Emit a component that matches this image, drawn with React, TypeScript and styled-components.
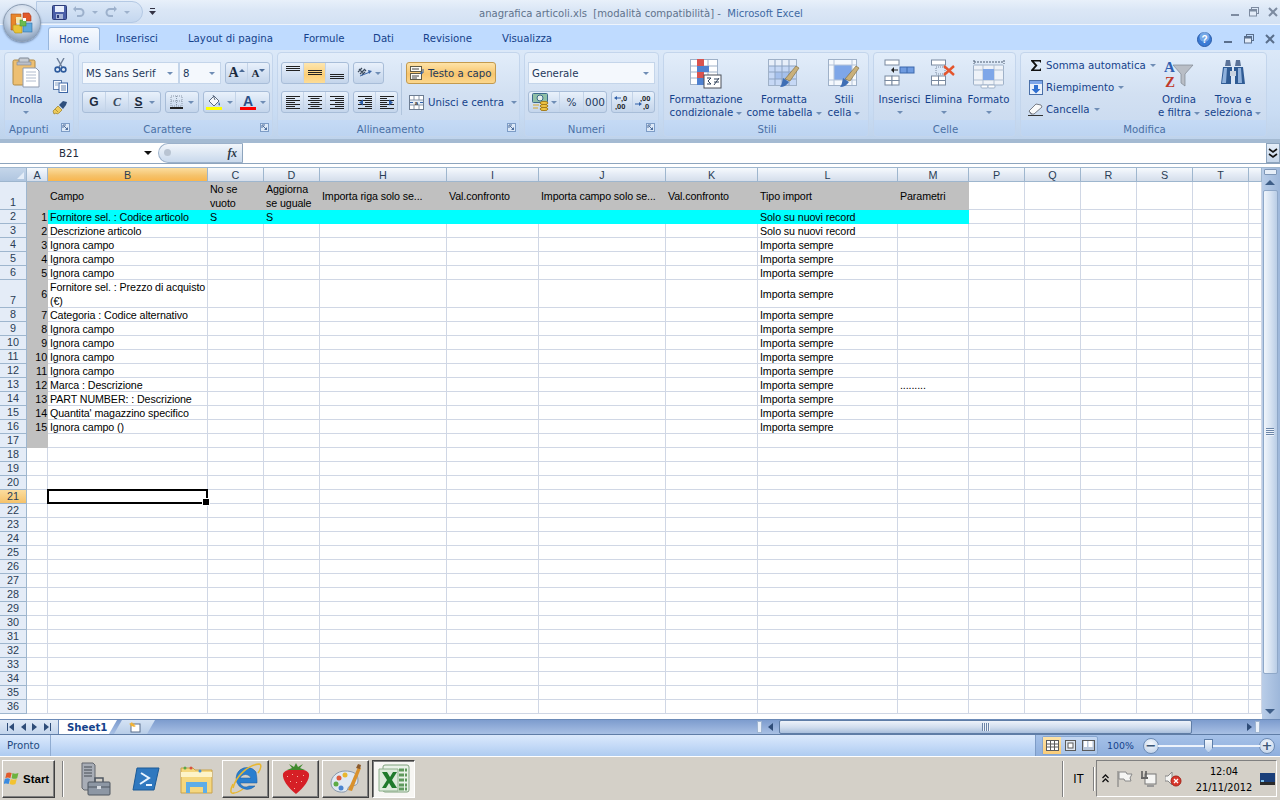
import React from 'react';
import styled, { createGlobalStyle } from 'styled-components';

const Global = createGlobalStyle`
  html, body { margin: 0; padding: 0; width: 1280px; height: 800px; overflow: hidden; background: #d4d0c8; }
  * { box-sizing: border-box; }
`;

const UI = `"DejaVu Sans", "Liberation Sans", sans-serif`;
const CELL = `"Liberation Sans", Arial, sans-serif`;

const Page = styled.div`
  position: relative; width: 1280px; height: 800px; display: flex; flex-direction: column;
  overflow: hidden; font-family: ${UI}; font-size: 10.2px; color: #15428b;
`;

/* ---------- title ---------- */
const TitleBar = styled.div`
  height: 25px; flex: none; display: flex; align-items: center; position: relative;
  background: linear-gradient(#e8f0fa 0, #dbe7f6 40%, #d3e1f3 100%);
  border-bottom: 1px solid #eef4fc;
`;
const Qat = styled.div`
  margin-left: 36px; width: 107px; height: 22px; border-radius: 0 11px 11px 0; display: flex; align-items: center;
  padding-left: 15px; gap: 0; background: linear-gradient(#dce8f7, #c4d7ef); border: 1px solid #b4c9e4;
`;
const QatItem = styled.div<{ $w: number }>`
  width: ${p => p.$w}px; display: flex; align-items: center; justify-content: center;
`;
const QatMore = styled.div`
  margin-left: 6px; display: flex;
`;
const TitleText = styled.div`
  position: absolute; left: 479px; top: 8px; font-size: 10.05px; color: #60738c; white-space: pre;
`;
const TitleApp = styled.span`color: #3f6aa3;`;
const WinControls = styled.div`
  margin-left: auto; display: flex; align-items: center; gap: 9px; padding-right: 2px;
`;

/* ---------- orb ---------- */
const Orb = styled.div`
  position: absolute; left: 3px; top: 4px; width: 38px; height: 38px; border-radius: 50%;
  display: flex; align-items: center; justify-content: center;
  background: radial-gradient(circle at 50% 30%, #f4f7fb 0, #c6d4e6 50%, #7f97b5 85%, #5f7690 100%);
  border: 1px solid #8b9cb2; box-shadow: 0 1px 2px rgba(60, 80, 110, .6);
`;

/* ---------- tabs ---------- */
const TabBar = styled.div`
  height: 25px; flex: none; display: flex; align-items: flex-end; background: #bfdbff; padding-left: 48px;
`;
const Tab = styled.div<{ $w: number; $on?: boolean }>`
  width: ${p => p.$w}px; height: 23px; display: flex; align-items: center; justify-content: center; font-size: 10.2px;
  color: #15428b; border-radius: 3px 3px 0 0;
  ${p => p.$on ? `background: linear-gradient(#f6f9fe, #dfeafa); border: 1px solid #98b6dc; border-bottom: none;` : ''}
`;
const HelpBox = styled.div`
  margin-left: auto; height: 22px; display: flex; align-items: center; gap: 11px; padding-right: 5px;
`;

/* ---------- ribbon ---------- */
const Ribbon = styled.div`
  height: 93px; flex: none; display: flex; gap: 4px; padding: 2px 0 0 4px;
  background: linear-gradient(#dbe8f8, #c9dcf3 70%, #bed3ec);
  border-bottom: 4px solid #a4bad2;
`;
const Group = styled.div<{ $w: number }>`
  width: ${p => p.$w}px; height: 85px; display: flex; flex-direction: column; border-radius: 4px;
  border: 1px solid #c3d5ec; background: linear-gradient(#e2edfa, #d2e0f2 50%, #c8d9ef); overflow: hidden;
`;
const GroupBody = styled.div<{ $pt?: number; $pl?: number }>`
  flex: 1; display: flex; min-height: 0; padding: ${p => p.$pt ?? 0}px 0 0 ${p => p.$pl ?? 0}px;
`;
const GroupLabel = styled.div<{ $pr?: number; $start?: boolean }>`
  position: relative; height: 16px; flex: none; display: flex; align-items: center;
  justify-content: ${p => (p.$start ? 'flex-start' : 'center')};
  padding: 2px ${p => p.$pr ?? 0}px 0 ${p => (p.$start ? 4 : 2)}px;
  background: linear-gradient(#c5daf5, #bdd4f1); color: #4a70a5; font-size: 10.2px;
`;
const Launcher = styled.span`
  position: absolute; right: 3px; top: 3px; width: 9px; height: 9px; display: flex;
`;
const Stack = styled.div<{ $gap?: number; $w?: number; $pt?: number }>`
  display: flex; flex-direction: column; gap: ${p => p.$gap ?? 0}px; padding-top: ${p => p.$pt ?? 0}px; ${p => (p.$w ? `width: ${p.$w}px;` : '')}
`;
const Row = styled.div<{ $gap?: number }>`
  display: flex; align-items: center; gap: ${p => p.$gap ?? 0}px;
`;
const Large = styled.div<{ $w: number }>`
  width: ${p => p.$w}px; flex: none; display: flex; flex-direction: column; align-items: center; padding-top: 4px;
  color: #15428b; font-size: 10.2px; line-height: 13px; text-align: center; white-space: nowrap;
`;
const LargeIcon = styled.div`
  height: 36px; padding-top: 2px; display: flex; align-items: flex-start; justify-content: center;
`;
const PasteBox = styled.div`margin-top: -2px;`;
const CaretBox = styled.div`
  height: 13px; display: flex; align-items: center; justify-content: center;
`;
const Caret = styled.span<{ $c?: string; $ml?: number }>`
  display: inline-block; width: 0; height: 0; margin-left: ${p => p.$ml ?? 0}px; vertical-align: middle;
  border-left: 3px solid transparent; border-right: 3px solid transparent; border-top: 3px solid ${p => p.$c ?? '#6f8db5'};
`;
const SmallIcons = styled.div`
  display: flex; flex-direction: column; align-items: center; width: 26px; gap: 7px; padding-top: 5px;
`;
const Combo = styled.div<{ $w: number }>`
  width: ${p => p.$w}px; height: 22px; display: flex; align-items: center; justify-content: space-between;
  padding: 0 5px 0 3px; background: #f4f8fd; border: 1px solid #c4d5ea; color: #1e395b; font-size: 10.2px; white-space: nowrap;
`;
const Combos = styled.div`
  display: flex;
`;
const BtnGroup = styled.div`
  height: 22px; display: inline-flex; border: 1px solid #a8bdd8; border-radius: 3px; overflow: hidden;
  background: linear-gradient(#e9f1fb, #d5e2f3 50%, #c4d5eb);
`;
const Seg = styled.div<{ $w: number; $on?: boolean; $gap?: number }>`
  width: ${p => p.$w}px; display: flex; align-items: center; justify-content: center; gap: ${p => p.$gap ?? 2}px; color: #1e395b;
  border-right: 1px solid #c4d4e8;
  &:last-child { border-right: none; }
  ${p => p.$on ? 'background: linear-gradient(#fde6b0, #fbcf78 60%, #fcdc97);' : ''}
`;
const Divider = styled.div`
  width: 1px; height: 52px; background: #b1c5dd; margin: 1px 4px 0 3px; flex: none;
`;
const Wrap = styled.div`
  width: 90px; height: 22px; display: flex; align-items: center; gap: 2px; padding-left: 3px; border: 1px solid #c39a4e; border-radius: 3px;
  background: linear-gradient(#fde3a8, #f8c56d 55%, #fbd78e); color: #1e395b; font-size: 10.2px; white-space: nowrap;
`;
const Merge = styled.div`
  height: 22px; display: flex; align-items: center; gap: 4px; padding-left: 3px; color: #15428b; font-size: 10.2px; white-space: nowrap;
`;
const SmallAction = styled.div`
  height: 22px; display: flex; align-items: center; gap: 3px; padding-left: 3px; color: #15428b; white-space: nowrap;
`;
const ActionIcon = styled.span`
  width: 15px; height: 15px; display: flex; align-items: center; justify-content: center; flex: none;
`;
const Num = styled.span`
  font-size: 10.5px; color: #1e395b; font-family: ${UI};
`;

/* ---------- formula ---------- */
const FormulaBar = styled.div`
  height: 21px; flex: none; display: flex; align-items: stretch; background: #fff; border-bottom: 1px solid #8da4bd;
`;
const NameBox = styled.div`
  width: 154px; display: flex; align-items: center; padding: 0 0 0 59px; font-size: 10.2px; color: #1e2b3c;
`;
const NameText = styled.span`flex: 1;`;
const NameArrow = styled.span`
  width: 0; height: 0; margin-right: 2px; border-left: 4px solid transparent; border-right: 4px solid transparent; border-top: 4px solid #111;
`;
const FxPill = styled.div`
  position: relative; margin-left: 4px; width: 85px; display: flex; align-items: center; justify-content: flex-end; padding-right: 5px;
  background: linear-gradient(#f2f6fb, #c9d9ec); border: 1px solid #9cb1ca; border-right: 1px solid #8da4bd; border-radius: 11px 0 0 11px;
  font-family: "Liberation Serif", serif; font-style: italic; font-weight: bold; font-size: 11.5px; color: #2b3848;
  &::before { content: ''; position: absolute; left: 5px; top: 5px; width: 7px; height: 7px; border-radius: 50%; background: #b9c4d2; }
`;
const FormulaInput = styled.div`flex: 1; background: #fff;`;
const Expand = styled.div`
  width: 14px; background: linear-gradient(#e6eef8, #c5d6ea); border: 1px solid #8da4bd; display: flex; align-items: center; justify-content: center;
`;
const Gap = styled.div`height: 4px; flex: none; background: #fff; border-bottom: 1px solid #9eb6ce;`;

/* ---------- sheet ---------- */
const Sheet = styled.div`
  height: 551px; flex: none; display: flex; background: #fff;
`;
const COLS = [27, 21, 160, 56, 56, 127, 92, 127, 92, 140, 71, 56, 56, 56, 56, 56, 13];
const ROWS = [14, 28, 14, 14, 14, 14, 14, 28, ...Array(29).fill(14)];
const Grid = styled.div`
  width: 1262px; height: 551px; overflow: hidden; display: grid;
  grid-template-columns: ${COLS.map(c => c + 'px').join(' ')};
  grid-template-rows: ${ROWS.map(c => c + 'px').join(' ')};
  font-family: ${CELL}; font-size: 10.7px; color: #000;
`;
const Corner = styled.div`
  background: linear-gradient(#c5d6ea, #b0c6e0); border-right: 1px solid #9eb6ce; border-bottom: 1px solid #9eb6ce; position: relative;
  &::after { content: ''; position: absolute; right: 2px; bottom: 2px; width: 0; height: 0; border-left: 7px solid transparent; border-bottom: 7px solid #e4edf8; }
`;
const ColHead = styled.div<{ $on?: boolean }>`
  display: flex; align-items: center; justify-content: center; font-size: 10.8px; color: #2a3d55;
  border-right: 1px solid #9eb6ce; border-bottom: 1px solid #9eb6ce;
  background: ${p => p.$on ? 'linear-gradient(#fbdd9f, #f5c26a 60%, #f9b64e)' : 'linear-gradient(#f7fafd, #e4ebf5 50%, #d5deeb)'};
`;
const RowHead = styled.div<{ $on?: boolean; $low?: boolean }>`
  display: flex; align-items: ${p => (p.$low ? 'flex-end' : 'center')}; justify-content: center; font-size: 10.8px; color: #2a3d55;
  border-right: 1px solid #9eb6ce; border-bottom: 1px solid #9eb6ce; line-height: 13px;
  background: ${p => p.$on ? 'linear-gradient(#fbdd9f, #f5c26a)' : '#e4ecf7'};
`;
const Cell = styled.div<{ $fill?: string; $right?: boolean; $wrap?: boolean }>`
  position: relative; min-width: 0; display: flex; align-items: center; padding: 0 ${p => (p.$right ? 1 : 0)}px 0 ${p => (p.$right ? 0 : 2)}px;
  justify-content: ${p => (p.$right ? 'flex-end' : 'flex-start')};
  white-space: ${p => (p.$wrap ? 'normal' : 'nowrap')}; line-height: 14px; letter-spacing: -0.1px;
  ${p => p.$fill ? `background: ${p.$fill};` : `border-right: 1px solid #d0d7e5; border-bottom: 1px solid #d0d7e5;`}
`;
const Selected = styled.div`
  position: absolute; left: -1px; top: -1px; width: 161px; height: 15px; border: 2px solid #000; z-index: 2;
  &::after { content: ''; position: absolute; right: -4px; bottom: -4px; width: 6px; height: 6px; background: #000; border: 1px solid #fff; }
`;
const VScroll = styled.div`
  width: 18px; flex: none; display: flex; flex-direction: column; align-items: center; padding-right: 2px;
  background: linear-gradient(90deg, #b9cde8, #9db7da);
`;
const Split = styled.div`
  height: 6px; width: 13px; flex: none; background: #e6eef8; border: 1px solid #7e97b7; border-radius: 1px; margin-top: 1px;
`;
const VArrow = styled.div<{ $down?: boolean }>`
  height: 15px; width: 15px; flex: none; display: flex; align-items: center; justify-content: center;
  &::after { content: ''; width: 0; height: 0; border-left: 5px solid transparent; border-right: 5px solid transparent;
    ${p => (p.$down ? 'border-top: 5px solid #3e5e88;' : 'border-bottom: 5px solid #3e5e88;')} }
`;
const VThumb = styled.div`
  flex: none; width: 15px; height: 484px; margin-top: 0; border: 1px solid #8fa8c8; border-radius: 2px;
  background: linear-gradient(90deg, #f0f5fb, #d7e3f2 50%, #b9cde6); display: flex; align-items: center; justify-content: center;
`;
const Grip = styled.span<{ $h?: boolean }>`
  display: block; ${p => (p.$h
    ? 'width: 8px; height: 8px; background: repeating-linear-gradient(90deg, #6b85a8 0 1px, #eef3fa 1px 2px);'
    : 'width: 8px; height: 8px; background: repeating-linear-gradient(#6b85a8 0 1px, #eef3fa 1px 2px);')}
`;
const VSpacer = styled.div`flex: 1;`;

/* ---------- sheet tabs ---------- */
const TabsBar = styled.div`
  height: 16px; flex: none; display: flex; align-items: stretch; background: linear-gradient(#7d9cce, #a8c0e4);
  border-top: 1px solid #6c8bb8; border-bottom: 1px solid #5f7da6;
`;
const Nav = styled.div`
  width: 59px; display: flex; align-items: center; justify-content: space-evenly; background: linear-gradient(#dfe9f6, #c3d5ec); border-right: 1px solid #6c8bb8;
`;
const NavItem = styled.span`display: flex; align-items: center; gap: 1px;`;
const NavBar = styled.span`width: 1px; height: 8px; background: #2e4c78;`;
const SheetTab = styled.div`
  width: 58px; background: #fff; color: #15428b; font-weight: bold; font-size: 10.2px; display: flex; align-items: center; padding-left: 8px;
  clip-path: polygon(0 0, 100% 0, calc(100% - 8px) 100%, 0 100%);
`;
const NewTab = styled.div`
  width: 41px; background: linear-gradient(#d4e2f4, #b8cde8); clip-path: polygon(8px 0, 100% 0, calc(100% - 8px) 100%, 0 100%); display: flex; align-items: center; justify-content: center;
  margin-left: -3px;
`;
const HScroll = styled.div`
  margin-left: auto; width: 523px; display: flex; align-items: stretch; padding-right: 20px;
`;
const HBtn = styled.div<{ $w: number }>`
  width: ${p => p.$w}px; flex: none; display: flex; align-items: center; justify-content: center;
`;
const HThumb = styled.div`
  flex: none; width: 413px; background: linear-gradient(#eef3fa, #cfdced 55%, #a9bfdc); border: 1px solid #5f7da6; border-radius: 2px;
  display: flex; align-items: center; justify-content: center;
`;
const HFill = styled.div`flex: 1;`;
const TriR = styled.span<{ $left?: boolean }>`
  width: 0; height: 0; border-top: 4px solid transparent; border-bottom: 4px solid transparent;
  ${p => (p.$left ? 'border-right: 5px solid #2e4c78;' : 'border-left: 5px solid #2e4c78;')}
`;
const HGrip = styled.div`width: 5px; flex: none; margin: 1px 0; background: #eaf1fa; border: 1px solid #9fb5d1;`;

/* ---------- status ---------- */
const Status = styled.div`
  height: 22px; flex: none; display: flex; align-items: stretch; background: linear-gradient(#dbe9fb, #c7dcf8 45%, #aecbf0);
  border-bottom: 1px solid #fff; color: #1e4a80; font-size: 10.2px;
`;
const Pronto = styled.div`
  width: 51px; display: flex; align-items: center; padding-left: 7px; border-right: 1px solid #90acd1; 
`;
const StatusRight = styled.div`
  margin-left: auto; width: 245px; display: flex; align-items: center; padding-left: 6px; color: #15428b;
  background: linear-gradient(#a5c1e8, #8fafdd); border-left: 1px solid #7e9cc6;
`;
const Views = styled.div`
  display: flex; height: 19px; width: 56px; border: 1px solid #87a6d0; border-radius: 2px; background: linear-gradient(#c5d8f2, #a9c4e8);
`;
const ViewBtn = styled.div<{ $on?: boolean }>`
  flex: 1; display: flex; align-items: center; justify-content: center;
  ${p => (p.$on ? 'background: linear-gradient(#fde3a8, #f9cc78);' : '')}
`;
const Zoom = styled.span`margin-left: 9px; width: 36px; font-size: 9.4px;`;
const ZoomTrack = styled.div`
  position: relative; width: 102px; height: 2px; background: #ecf3fc; margin: 0 -1px; 
`;
const ZoomKnob = styled.div`
  position: absolute; left: 46px; top: -6px; width: 9px; height: 14px; background: linear-gradient(#f4f8fd, #b9cee9); border: 1px solid #5d7ea9;
  clip-path: polygon(0 0, 100% 0, 100% 65%, 50% 100%, 0 65%);
`;
const ZoomBtn = styled.div`
  width: 16px; height: 16px; border-radius: 50%; flex: none; border: 1px solid #6d8cb6; background: radial-gradient(circle at 50% 35%, #f6f9fd, #b8cce6);
  display: flex; align-items: center; justify-content: center; color: #3d5878; font-size: 13px; font-weight: bold; line-height: 1;
`;

/* ---------- taskbar ---------- */
const Taskbar = styled.div`
  height: 43px; flex: none; display: flex; align-items: center; background: #d4d0c8; padding: 0 3px 0 2px; font-family: "DejaVu Sans", sans-serif; color: #000;
`;
const StartBtn = styled.div`
  width: 53px; height: 38px; margin-right: 7px; display: flex; align-items: center; gap: 2px; padding-left: 1px; font-family: "Liberation Sans", sans-serif; font-weight: bold; font-size: 11.5px;
  border: 1px solid; border-color: #fff #404040 #404040 #fff; box-shadow: inset -1px -1px 0 #808080;
`;
const Etched = styled.div<{ $h?: number }>`
  width: 2px; height: ${p => p.$h ?? 36}px; flex: none; border-left: 1px solid #808080; border-right: 1px solid #fff;
`;
const Launch = styled.div<{ $w: number; $pl?: number }>`
  width: ${p => p.$w}px; height: 38px; flex: none; display: flex; align-items: center; justify-content: center; padding-left: ${p => p.$pl ?? 0}px;
`;
const TaskBtn = styled.div<{ $down?: boolean; $w: number }>`
  width: ${p => p.$w}px; height: 38px; flex: none; display: flex; align-items: center; justify-content: center; margin-right: 3px;
  border: 1px solid; 
  ${p => p.$down
    ? 'border-color: #404040 #fff #fff #404040; box-shadow: inset 1px 1px 0 #808080; background: #f7f6f3;'
    : 'border-color: #fff #404040 #404040 #fff; box-shadow: inset -1px -1px 0 #808080;'}
`;
const Lang = styled.div`
  width: 29px; text-align: center; font-size: 12px; font-family: "Liberation Sans", sans-serif;
`;
const Tray = styled.div`
  width: 181px; height: 37px; margin-left: 1px; display: flex; align-items: center; border: 1px solid; border-color: #808080 #fff #fff #808080;
`;
const Clock = styled.div`
  margin: 3px 0 0 8px; width: 62px; flex: none; text-align: center; font-size: 9.8px; line-height: 16px; white-space: nowrap; font-family: "DejaVu Sans", sans-serif;
`;
const TrayIcon = styled.div<{ $w?: number }>`
  width: ${p => p.$w ?? 24}px; display: flex; justify-content: center; flex: none;
`;
const Push = styled.div`margin-left: auto;`;

/* ---------- icons ---------- */
const Orblogo = () => (
  <svg width="26" height="26" viewBox="0 0 26 26">
    <path d="M2 4h10v5H7v11H2z" fill="#e8862c" stroke="#a6541b" strokeWidth=".6" />
    <rect x="7" y="7" width="6" height="6" fill="#f4e7a8" />
    <path d="M14 3h6l2 3v5h-8z" fill="#e25a2a" stroke="#a6381b" strokeWidth=".6" />
    <rect x="14" y="13" width="9" height="9" fill="#5fa9dc" stroke="#2f6fa6" strokeWidth=".6" />
    <path d="M4 15h9v8H6l-2-3z" fill="#e9c436" stroke="#a78d1f" strokeWidth=".6" />
    <rect x="11" y="10" width="6" height="6" fill="#6cbb4f" stroke="#3e8c2d" strokeWidth=".5" />
    <rect x="14" y="8" width="3" height="3" fill="#fff" />
  </svg>
);
const Save = () => (
  <svg width="15" height="15" viewBox="0 0 15 15">
    <rect x=".5" y=".5" width="14" height="14" rx="1" fill="#4a5fa8" stroke="#2c3b78" />
    <rect x="3" y="1" width="9" height="6" fill="#e8eefb" />
    <rect x="4" y="9" width="7" height="5" fill="#a8b6d8" />
    <rect x="5" y="10" width="2" height="3" fill="#2c3b78" />
  </svg>
);
const Curl = ({ flip }: { flip?: boolean }) => (
  <svg width="13" height="12" viewBox="0 0 13 12">
    <g transform={flip ? 'matrix(-1 0 0 1 13 0)' : undefined}>
      <path d="M3 3h5a3.5 3.5 0 0 1 0 7H5" fill="none" stroke="#9db1cc" strokeWidth="2" />
      <path d="M1 3l3-3v6z" fill="#9db1cc" />
    </g>
  </svg>
);
const QatDrop = () => (
  <svg width="7" height="8" viewBox="0 0 7 8"><rect x="1" y="0" width="5" height="1" fill="#334" /><path d="M0 3h7L3.5 7z" fill="#334" /></svg>
);
const WinMin = ({ c }: { c: string }) => <svg width="10" height="10" viewBox="0 0 10 10"><rect x="1" y="7" width="8" height="2" fill={c} /></svg>;
const WinMax = ({ c }: { c: string }) => (
  <svg width="10" height="10" viewBox="0 0 10 10"><rect x="2.5" y=".5" width="7" height="6" fill="none" stroke={c} /><rect x=".5" y="2.5" width="7" height="6.5" fill="#e3ecf8" stroke={c} /><rect x="1" y="3" width="6" height="1.5" fill={c} /></svg>
);
const WinX = ({ c }: { c: string }) => <svg width="10" height="10" viewBox="0 0 10 10"><path d="M1 1l8 8M9 1l-8 8" stroke={c} strokeWidth="2" /></svg>;
const Help = () => (
  <svg width="15" height="15" viewBox="0 0 15 15">
    <circle cx="7.5" cy="7.5" r="7" fill="#3a7bd5" stroke="#2a5aa6" />
    <circle cx="7.5" cy="5" r="5" fill="#9cc6f5" opacity=".6" />
    <text x="7.5" y="11" textAnchor="middle" fontFamily="Liberation Sans" fontWeight="bold" fontSize="10" fill="#fff">?</text>
  </svg>
);
const Launch9 = () => (
  <svg width="9" height="9" viewBox="0 0 9 9">
    <rect x=".5" y=".5" width="8" height="8" fill="#dce8f7" stroke="#7d9cc6" />
    <path d="M2 2h3M2 2v3M3 3l3 3" stroke="#4f6f9d" fill="none" />
    <path d="M7 7V4L4 7z" fill="#4f6f9d" />
  </svg>
);
const Paste = () => (
  <svg width="30" height="32" viewBox="-2 0 30 32">
    <rect x="0" y="3" width="22" height="25" rx="1.5" fill="#edbf72" stroke="#b08a45" />
    <rect x="6" y="1" width="10" height="5" rx="1" fill="#c7ccd4" stroke="#7f8794" />
    <rect x="4" y="5" width="14" height="3" fill="#b9bec8" stroke="#7f8794" strokeWidth=".6" />
    <path d="M10 11h13l3 3v16H10z" fill="#fff" stroke="#8f9bb0" />
    <path d="M13 15h10M13 18h10M13 21h10M13 24h10" stroke="#b0bbcd" />
  </svg>
);
const Cut = () => (
  <svg width="13" height="15" viewBox="0 0 13 15">
    <path d="M3 0l5 9M10 0L5 9" stroke="#6e7f99" strokeWidth="1.4" />
    <circle cx="3.5" cy="11.5" r="2.4" fill="none" stroke="#2f5c9e" strokeWidth="1.6" />
    <circle cx="9.5" cy="11.5" r="2.4" fill="none" stroke="#2f5c9e" strokeWidth="1.6" />
  </svg>
);
const Copy = () => (
  <svg width="15" height="13" viewBox="0 0 15 13">
    <rect x=".5" y=".5" width="8" height="9" fill="#f4f8fd" stroke="#5f7fad" />
    <rect x="6" y="3" width="8.5" height="9.5" fill="#fff" stroke="#3b65a5" />
    <path d="M8 6h5M8 8h5M8 10h5" stroke="#5f7fad" />
    <path d="M2 3h4M2 5h3" stroke="#8fa8c8" />
  </svg>
);
const Brush = () => (
  <svg width="16" height="15" viewBox="0 0 16 15">
    <path d="M1 11l5-5 4 4-3 3-2 1-1-1-2 1z" fill="#eecb5b" stroke="#9c7e22" strokeWidth=".7" />
    <path d="M7 5l4-4 4 1-1 3-3 4z" fill="#2e4f7d" />
    <path d="M3 9l3 3" stroke="#9c7e22" strokeWidth=".7" />
  </svg>
);
const Bold = styled.span<{ $it?: boolean; $ul?: boolean }>`
  font-family: "Liberation Sans", sans-serif; font-weight: bold; font-size: 12px; color: #1b2a3d;
  ${p => (p.$it ? 'font-family: "Liberation Serif", serif; font-style: italic; color: #3b4a5e;' : '')}
  ${p => (p.$ul ? 'text-decoration: underline;' : '')}
`;
const BigA = styled.span<{ $s: number }>`
  font-family: "Liberation Serif", serif; font-weight: bold; font-size: ${p => p.$s}px; color: #1b2a3d; display: flex; align-items: flex-start; line-height: 1;
`;
const Up = styled.span<{ $down?: boolean }>`
  width: 0; height: 0; margin: -6px 0 0 -2px; border-left: 3px solid transparent; border-right: 3px solid transparent;
  ${p => (p.$down ? 'border-top: 3px solid #4a6a96;' : 'border-bottom: 3px solid #4a6a96;')}
`;
const Borders = () => (
  <svg width="13" height="14" viewBox="0 0 13 14">
    <path d="M1 1h11v10H1zM6.500 1v10M1 6h11" fill="none" stroke="#8a97a8" strokeDasharray="1 1" />
    <rect x="0" y="12" width="13" height="2" fill="#222" />
  </svg>
);
const Fill = () => (
  <svg width="16" height="16" viewBox="0 0 16 16">
    <path d="M3 7l5-5 5 5-5 5z" fill="#f6f8fb" stroke="#5b6a80" />
    <path d="M7 1l2 5" stroke="#5b6a80" />
    <path d="M13 8c1 1.500 1.500 3 .5 3.500S12 10 13 8z" fill="#3c6fb0" />
    <rect x="0" y="13" width="16" height="3" fill="#ffff00" />
  </svg>
);
const FontColor = () => (
  <svg width="16" height="16" viewBox="0 0 16 16">
    <text x="8" y="12" textAnchor="middle" fontFamily="Liberation Sans" fontWeight="bold" fontSize="14" fill="#2c4f86">A</text>
    <rect x="0" y="13" width="16" height="3" fill="#ff0000" />
  </svg>
);
const VA = ({ pos }: { pos: 0 | 1 | 2 }) => (
  <svg width="14" height="14" viewBox="0 0 14 14">
    {[0, 1, 2].map(i => <rect key={i} x="0" y={[0, 4, 8][pos] + i * 2} width="14" height="1" fill="#222" />)}
  </svg>
);
const HA = ({ a }: { a: 'l' | 'c' | 'r' }) => {
  const w = [14, 9, 14, 9, 14, 9, 14];
  return (
    <svg width="14" height="13" viewBox="0 0 14 13">
      {w.map((v, i) => <rect key={i} x={a === 'l' ? 0 : a === 'c' ? (14 - v) / 2 : 14 - v} y={i * 2} width={v} height="1" fill="#222" />)}
    </svg>
  );
};
const Orient = () => (
  <svg width="16" height="14" viewBox="0 0 16 14">
    <path d="M1 6l4-4M3 8l4-4M2 3l4 4M5 9l3-3M7 3l2 2" stroke="#3c4a5c" strokeWidth="1.2" fill="none" />
    <path d="M3 10l10-4" stroke="#3b65a5" /><path d="M15 5l-4-1 1 4z" fill="#3b65a5" />
  </svg>
);
const Indent = ({ rev }: { rev?: boolean }) => (
  <svg width="14" height="13" viewBox="0 0 14 13">
    <g transform={rev ? 'matrix(-1 0 0 1 14 0)' : undefined}>
      {[0, 2, 4, 6, 8, 10, 12].map(y => <rect key={y} x={y % 4 === 0 ? 0 : 7} y={y} width={y % 4 === 0 ? 14 : 7} height="1" fill="#222" />)}
      <path d="M1 6.500l4-3v6z" fill="#2f5fa8" />
    </g>
  </svg>
);
const WrapIcon = () => (
  <svg width="16" height="14" viewBox="0 0 16 14">
    <rect x=".5" y=".5" width="11" height="5" fill="#fbfbf6" stroke="#5f5a45" />
    <rect x=".5" y="7.500" width="11" height="6" fill="#fbfbf6" stroke="#5f5a45" />
    <path d="M2 3h7M2 10h7M2 12h5" stroke="#444" />
    <path d="M13 3v4h-2" fill="none" stroke="#2f5fa8" /><path d="M12 5l-2 2 2 2z" fill="#2f5fa8" />
  </svg>
);
const MergeIcon = () => (
  <svg width="15" height="15" viewBox="0 0 15 15">
    <rect x=".5" y=".5" width="14" height="14" fill="#fff" stroke="#6d7d92" />
    <rect x="1" y="5" width="13" height="5" fill="#e6eef8" />
    <path d="M1 5h13M1 10h13M5 1v4M10 1v4M5 10v4M10 10v4" stroke="#8a97a8" />
    <text x="7.500" y="9.500" textAnchor="middle" fontSize="6" fontFamily="Liberation Sans" fontWeight="bold" fill="#333">a</text>
    <path d="M1 7.500h3M14 7.500h-3" stroke="#2f5fa8" />
  </svg>
);
const Coins = () => (
  <svg width="17" height="18" viewBox="0 0 17 18">
    <rect x=".5" y=".5" width="15" height="9" rx="1" fill="#8fc0a7" stroke="#3c6a8c" />
    <ellipse cx="8" cy="5" rx="3" ry="3" fill="#e4efe8" stroke="#3c6a8c" />
    <ellipse cx="12" cy="10" rx="4" ry="1.600" fill="#f0c544" stroke="#a37c1a" />
    <ellipse cx="12" cy="13" rx="4" ry="1.600" fill="#f0c544" stroke="#a37c1a" />
    <ellipse cx="12" cy="16" rx="4" ry="1.600" fill="#f0c544" stroke="#a37c1a" />
    <path d="M1 12h6M1 15h5" stroke="#d4a62c" />
  </svg>
);
const DecInc = ({ rev }: { rev?: boolean }) => (
  <svg width="19" height="16" viewBox="0 0 19 16">
    <text x={rev ? 6 : 8} y="7" fontFamily="Liberation Sans" fontSize="7.500" fontWeight="bold" fill="#222">{rev ? ',00' : ',0'}</text>
    <text x={rev ? 9 : 2} y="15" fontFamily="Liberation Sans" fontSize="7.500" fontWeight="bold" fill="#222">{rev ? ',0' : ',00'}</text>
    <path d={rev ? 'M1 10h4' : 'M3 4h5'} stroke="#2f5fa8" /><path d={rev ? 'M5 8l3 2-3 2z' : 'M4 2l-3 2 3 2z'} fill="#2f5fa8" />
  </svg>
);
const CondFormat = () => (
  <svg width="32" height="30" viewBox="0 0 32 30">
    <rect x=".5" y=".5" width="27" height="25" fill="#fff" stroke="#9fb1c8" />
    <path d="M9 1v25M18 1v25M1 7h26M1 13h26M1 19h26" stroke="#9fb1c8" />
    <rect x="7" y="0" width="7" height="7" fill="#d9534f" /><rect x="7" y="7" width="12" height="6" fill="#4f81d0" />
    <rect x="7" y="13" width="7" height="6" fill="#d9534f" /><rect x="7" y="19" width="7" height="7" fill="#4f81d0" />
    <rect x="14" y="16" width="17" height="13" fill="#fff" stroke="#4a4f58" />
    <path d="M17 19h4l-3 3 3 3h-4M24 20h5M24 23h5M29 19l-5 7" stroke="#33445c" fill="none" />
  </svg>
);
const TableBrush = ({ cell }: { cell?: boolean }) => (
  <svg width="32" height="30" viewBox="0 0 32 30">
    <rect x=".5" y=".5" width="28" height="26" fill={cell ? '#f4f8fd' : '#e8eff9'} stroke="#9fb1c8" />
    {cell
      ? <rect x="6" y="6" width="18" height="15" fill="#7ea6e8" />
      : <><rect x="1" y="7" width="27" height="19" fill="#c6d8f5" /><rect x="7" y="13" width="14" height="7" fill="#a5c0ec" /></>}
    {!cell && <path d="M7 1v25M14 1v25M21 1v25M1 7h27M1 13h27M1 20h27" stroke="#8da3c2" />}
    {cell && <path d="M6 1v25M24 1v25M1 6h27M1 21h27" stroke="#b4c3d8" />}
    <path d="M17 20L28 7l3 2-9 13z" fill="#c9b07a" stroke="#7a6635" strokeWidth=".6" />
    <path d="M15 19l6 4c-2 3-5 5-9 5 2-2 2-5 3-9z" fill="#3f6fb5" />
  </svg>
);
const Insert = () => (
  <svg width="31" height="27" viewBox="0 0 31 27">
    <g fill="#fff" stroke="#7a8aa0"><rect x="1" y="1" width="14" height="5" /><rect x="1" y="17" width="7" height="4.500" /><rect x="8" y="17" width="7" height="4.500" /><rect x="1" y="21.500" width="7" height="4.500" /><rect x="8" y="21.500" width="7" height="4.500" /></g>
    <rect x="16" y="8" width="14" height="6" fill="#6f9be0" stroke="#3d68ad" /><path d="M23 8v6" stroke="#3d68ad" />
    <path d="M14 11H8" stroke="#222" /><path d="M10 8l-3 3 3 3z" fill="#222" />
  </svg>
);
const Del = () => (
  <svg width="26" height="27" viewBox="0 0 26 27">
    <g fill="#fff" stroke="#7a8aa0"><rect x=".5" y="1" width="14" height="5" /><rect x=".5" y="17" width="7" height="4.500" /><rect x="7.500" y="17" width="7" height="4.500" /><rect x=".5" y="21.500" width="7" height="4.500" /><rect x="7.500" y="21.500" width="7" height="4.500" /></g>
    <rect x="5" y="8" width="9" height="7" fill="none" stroke="#7a8aa0" strokeDasharray="1 1" />
    <path d="M13 7l10 9M23 7l-10 9" stroke="#e4552d" strokeWidth="2.400" />
  </svg>
);
const Fmt = () => (
  <svg width="32" height="30" viewBox="0 0 32 30">
    <path d="M1 3h30M1 1v4M31 1v4" stroke="#4a5a70" strokeDasharray="2 1" />
    <rect x=".5" y="6" width="30" height="20" rx="1" fill="#eef2f8" stroke="#9fb1c8" />
    <path d="M10 6v20M21 6v20M1 11h30M1 21h30" stroke="#b0bfd2" />
    <rect x="10" y="10" width="11" height="11" fill="#7ea6e8" />
    <rect x="8" y="26" width="7" height="3" rx="1" fill="#fff" stroke="#9fb1c8" /><rect x="15" y="26" width="7" height="3" rx="1" fill="#fff" stroke="#9fb1c8" />
  </svg>
);
const Sigma = () => <svg width="12" height="11" viewBox="0 0 12 11"><path d="M1 0h10v3L9.500 1.500H4l3.500 4L4 9.500h5.500L11 8v3H1v-1l4-4.500L1 1z" fill="#111" /></svg>;
const FillDown = () => (
  <svg width="14" height="15" viewBox="0 0 14 15">
    <rect x=".5" y=".5" width="13" height="14" fill="#eaf1fb" stroke="#4a6fa8" />
    <rect x="1" y="1" width="12" height="3" fill="#7ea6e8" />
    <path d="M5 5h4v4h2.500L7 13.500 2.500 9H5z" fill="#2f6fd0" />
  </svg>
);
const Eraser = () => (
  <svg width="15" height="14" viewBox="0 0 15 14">
    <path d="M1 9l7-7 5 1 1 2-8 7H3z" fill="#fafafa" stroke="#7a7f88" />
    <path d="M1 9l3 3" stroke="#7a7f88" /><rect x="0" y="13" width="15" height="1" fill="#333" />
  </svg>
);
const SortFilter = () => (
  <svg width="30" height="30" viewBox="0 0 30 30">
    <text x="0" y="13" fontFamily="Liberation Serif" fontWeight="bold" fontSize="15" fill="#2f5fb0">A</text>
    <text x="1" y="28" fontFamily="Liberation Serif" fontWeight="bold" fontSize="15" fill="#c0392b">Z</text>
    <path d="M9 6h20l-8 9v12l-4-3V15z" fill="#b9bec6" stroke="#7f8690" strokeWidth=".7" />
  </svg>
);
const Binoc = () => (
  <svg width="28" height="27" viewBox="0 0 28 27">
    <path d="M7 1h4l1 6H6zM17 1h4l1 6h-6z" fill="#5a7298" />
    <path d="M4 8h9v4h2V8h9l2 17h-10v-8h-4v8H2z" fill="#2f5b94" />
    <path d="M5 9h3l-1 15H3zM19 9h3l1 15h-4z" fill="#8fb1dc" />
    <rect x="11" y="12" width="6" height="5" fill="#c9d3e0" />
  </svg>
);
const StartFlag = () => (
  <svg width="17" height="16" viewBox="0 0 20 18">
    <path d="M3 2c2-1 4-1 6 0l-1.500 6c-2-1-4-1-6 0z" fill="#e05a2b" />
    <path d="M10 2c2 1 4 1 7 0l-1.500 6c-2 1-4 1-6.500 0z" fill="#6cb33f" />
    <path d="M1 9c2-1 4-1 6 0l-1.500 6c-2-1-4-1-6 0z" fill="#3a8be0" />
    <path d="M8 9c2 1 4 1 7 0l-1.500 6c-2 1-4 1-7 0z" fill="#f2c230" />
  </svg>
);
const Server = () => (
  <svg width="30" height="34" viewBox="0 0 30 34">
    <path d="M1 1h11l2 2v21l-4 4H3l-2-2z" fill="#a8adb6" stroke="#62676f" />
    <path d="M3 5h8M3 8h8M3 11h8M3 14h8" stroke="#474c54" />
    <rect x="7" y="20" width="22" height="13" rx="1" fill="#8d97a4" stroke="#4f5761" />
    <path d="M14 20v-4h8v4" fill="none" stroke="#4f5761" strokeWidth="1.500" /><path d="M7 25h22" stroke="#4f5761" /><rect x="16" y="24" width="4" height="3" fill="#d6dbe1" />
  </svg>
);
const Ps = () => (
  <svg width="28" height="24" viewBox="0 0 28 24">
    <path d="M5 1h22l-5 22H1z" fill="#2f78bf" stroke="#1c5a96" />
    <path d="M9 6l8 5-9 6" fill="none" stroke="#e8f4ff" strokeWidth="2" /><path d="M14 18h6" stroke="#e8f4ff" strokeWidth="2" />
  </svg>
);
const Folder = () => (
  <svg width="33" height="30" viewBox="0 0 33 30">
    <path d="M1 4h12l2 2h17v23H1z" fill="#f5d77f" stroke="#c9a24a" />
    <rect x="1" y="8" width="31" height="5" fill="#fdf3c8" />
    <circle cx="5" cy="4" r="1.500" fill="#58a84a" /><circle cx="11" cy="4" r="1.500" fill="#d8533f" /><circle cx="20" cy="7" r="1.500" fill="#3f8fd8" />
    <path d="M6 29V18h21v11h-4v-6H10v6z" fill="#5dade8" />
  </svg>
);
const IE = () => (
  <svg width="32" height="33" viewBox="0 0 32 33">
    <path d="M26 10a11 11 0 1 0-1 14h-6a6 6 0 0 1-9-3h17c.300-4-.500-8-1-11zM10 16a6 6 0 0 1 11 0z" fill="#2a7fcf" stroke="#1a5a9e" strokeWidth=".5" />
    <path d="M3 26C6 14 18 3 29 2c3 0 2 5-1 9" fill="none" stroke="#e8b730" strokeWidth="1.500" />
    <path d="M3 22c-3 6-3 10 1 9 3 0 6-2 9-4" fill="none" stroke="#e8b730" strokeWidth="1.500" />
  </svg>
);
const Berry = () => (
  <svg width="28" height="33" viewBox="0 0 28 33">
    <path d="M14 32C6 26 0 17 1 12c1-4 7-5 13-4 6-1 12 0 13 4 1 5-5 14-13 20z" fill="#d61f26" />
    <path d="M5 14l1 1M10 12l1 1M15 14l1 1M21 13l1 1M8 19l1 1M14 20l1 1M19 19l1 1M12 26l1 1" stroke="#f5b5a5" />
    <path d="M14 8L5 8l5-2-3-4 5 3 2-4 2 4 5-3-3 4 5 2z" fill="#3f8a2e" />
  </svg>
);
const Palette = () => (
  <svg width="32" height="32" viewBox="0 0 32 32">
    <path d="M15 8C7 8 1 14 1 20s6 10 13 9c5-1 3-5 6-6s8 1 8-6-6-9-13-9z" fill="#dfe8f2" stroke="#8797ab" />
    <circle cx="9" cy="15" r="2.500" fill="#e05a3c" /><circle cx="15" cy="12" r="2.500" fill="#e8b730" /><circle cx="6" cy="21" r="2.500" fill="#5dab46" /><circle cx="11" cy="25" r="2.500" fill="#4a84d0" />
    <path d="M18 27L28 4l3 1-9 23z" fill="#d9912c" /><path d="M26 5l2-4 3 1-1 4z" fill="#8a5a2c" />
  </svg>
);
const Xl = () => (
  <svg width="32" height="32" viewBox="0 0 32 32">
    <rect x="5" y="2" width="26" height="27" rx="2" fill="#e9f2e8" stroke="#7ea17c" />
    <path d="M21 7h8M21 12h8M21 17h8M21 22h8M21 26h8" stroke="#5f9a5c" strokeWidth="3" strokeDasharray="5 1" />
    <path d="M1 6h19v22H1z" fill="#dceadb" stroke="#8fb08c" />
    <path d="M4 9h5l3 5 3-5h4l-5 8 5 8h-5l-3-5-3 5H4l5-8z" fill="#1f7a2c" />
  </svg>
);
const TrayFlag = () => (
  <svg width="16" height="16" viewBox="0 0 16 16"><path d="M1 0v16" stroke="#777" /><path d="M2 1h7l1 2h5l-2 4 1 3H8L7 8H2z" fill="#f5f5f3" stroke="#888" /></svg>
);
const TrayNet = () => (
  <svg width="16" height="16" viewBox="0 0 16 16"><rect x="4" y="3" width="11" height="10" fill="#f5f5f3" stroke="#777" /><path d="M1 0v8M5 0v8" stroke="#555" strokeWidth="1.500" /><path d="M0 6h7v2H0z" fill="#666" /><rect x="6" y="14" width="7" height="2" fill="#999" /></svg>
);
const TraySound = () => (
  <svg width="17" height="16" viewBox="0 0 17 16"><path d="M0 5h3l4-4v13l-4-4H0z" fill="#f5f5f3" stroke="#888" /><circle cx="11" cy="10" r="5" fill="#d9362b" stroke="#a52319" /><path d="M9 8l4 4M13 8l-4 4" stroke="#fff" strokeWidth="1.300" /></svg>
);
const Desktop = () => (
  <svg width="15" height="12" viewBox="0 0 15 12"><rect width="15" height="12" fill="#1a3f7a" /><rect y="9" width="15" height="3" fill="#2a2a2a" /><rect x="1" y="7" width="3" height="2" fill="#7ec0ea" /></svg>
);
const NewSheet = () => (
  <svg width="13" height="11" viewBox="0 0 13 11"><rect x="3" y="2" width="9" height="8" fill="#fff" stroke="#5a6f8c" /><path d="M4 0l1 2 2-1-1 2 2 1-2 1-2-1-2 1 1-2-2-1 2-1z" fill="#f2b233" /></svg>
);
const Pg = ({ k }: { k: 0 | 1 | 2 }) => (
  <svg width="13" height="11" viewBox="0 0 13 11">
    {k === 0 && <><rect x=".5" y=".5" width="12" height="10" fill="#fff" stroke="#5a5a5a" /><path d="M4.500 1v9M8.500 1v9M1 4h11M1 7h11" stroke="#5a5a5a" /></>}
    {k === 1 && <><rect x="1.500" y=".5" width="10" height="10" fill="#dfe7f1" stroke="#5a5a5a" /><rect x="4" y="3" width="5" height="5" fill="#fff" stroke="#5a5a5a" /></>}
    {k === 2 && <><rect x=".5" y=".5" width="12" height="10" fill="#b9c7da" stroke="#5a5a5a" /><rect x="2" y="1" width="3" height="6" fill="#fff" /><rect x="6.500" y="1" width="4" height="6" fill="#fff" /></>}
  </svg>
);
const DoubleDown = () => (
  <svg width="10" height="11" viewBox="0 0 10 11"><path d="M1 1l4 3 4-3M1 6l4 3 4-3" fill="none" stroke="#111" strokeWidth="1.600" /></svg>
);
const DoubleUp = () => (
  <svg width="7" height="9" viewBox="0 0 7 9"><path d="M.5 4l3-3 3 3M.5 8l3-3 3 3" fill="none" stroke="#111" strokeWidth="1.300" /></svg>
);

/* ---------- data ---------- */
const HEADS = ['A', 'B', 'C', 'D', 'H', 'I', 'J', 'K', 'L', 'M', 'P', 'Q', 'R', 'S', 'T', ''];
const IS = 'Importa sempre';
const SN = 'Solo su nuovi record';
const DATA: Record<number, { a: string; b: string; l: string; m?: string; c?: string; d?: string }> = {
  2: { a: '1', b: 'Fornitore sel. : Codice articolo', l: SN, c: 'S', d: 'S' },
  3: { a: '2', b: 'Descrizione articolo', l: SN },
  4: { a: '3', b: 'Ignora campo', l: IS },
  5: { a: '4', b: 'Ignora campo', l: IS },
  6: { a: '5', b: 'Ignora campo', l: IS },
  7: { a: '6', b: 'Fornitore sel. : Prezzo di acquisto (€)', l: IS },
  8: { a: '7', b: 'Categoria : Codice alternativo', l: IS },
  9: { a: '8', b: 'Ignora campo', l: IS },
  10: { a: '9', b: 'Ignora campo', l: IS },
  11: { a: '10', b: 'Ignora campo', l: IS },
  12: { a: '11', b: 'Ignora campo', l: IS },
  13: { a: '12', b: 'Marca : Descrizione', l: IS, m: '.........' },
  14: { a: '13', b: 'PART NUMBER:  : Descrizione', l: IS },
  15: { a: '14', b: "Quantita' magazzino specifico", l: IS },
  16: { a: '15', b: 'Ignora campo ()', l: IS },
};
const HEAD1 = ['Campo', 'No se vuoto', 'Aggiorna se uguale', 'Importa riga solo se...', 'Val.confronto', 'Importa campo solo se...', 'Val.confronto', 'Tipo import', 'Parametri'];
const GRAY = '#c0c0c0';
const CYAN = '#00ffff';

const renderRow = (r: number) => {
  const out: React.ReactNode[] = [];
  const low = r === 1 || r === 7;
  out.push(<RowHead key="h" $on={r === 21} $low={low}>{r}</RowHead>);
  const d = DATA[r];
  HEADS.forEach((_, i) => {
    const key = `c${i}`;
    if (r === 1 && i <= 9) {
      out.push(<Cell key={key} $fill={GRAY} $wrap={i === 2 || i === 3}>{i === 0 ? '' : HEAD1[i - 1]}</Cell>);
      return;
    }
    if (i === 0 && r <= 17) {
      out.push(<Cell key={key} $fill={GRAY} $right>{d?.a}</Cell>);
      return;
    }
    const fill = r === 2 && i >= 1 && i <= 9 ? CYAN : undefined;
    let text: string | undefined;
    if (d) {
      if (i === 1) text = d.b;
      if (i === 2) text = d.c;
      if (i === 3) text = d.d;
      if (i === 8) text = d.l;
      if (i === 9) text = d.m;
    }
    out.push(
      <Cell key={key} $fill={fill} $wrap={r === 7 && i === 1}>
        {text}
        {r === 21 && i === 1 ? <Selected /> : null}
      </Cell>
    );
  });
  return out;
};

const LargeBtn = ({ w, icon, l1, l2, caretInline }: { w: number; icon: React.ReactNode; l1: string; l2?: string; caretInline?: boolean }) => (
  <Large $w={w}>
    <LargeIcon>{icon}</LargeIcon>
    <div>{l1}</div>
    {caretInline ? <div>{l2}<Caret $ml={3} /></div> : <CaretBox><Caret /></CaretBox>}
  </Large>
);

export default function App() {
  return (
    <Page>
      <Global />
      <TitleBar>
        <Qat>
          <QatItem $w={15}><Save /></QatItem>
          <QatItem $w={22}><Curl /></QatItem>
          <QatItem $w={12}><Caret $c="#9db1cc" /></QatItem>
          <QatItem $w={20}><Curl flip /></QatItem>
          <QatItem $w={12}><Caret $c="#9db1cc" /></QatItem>
        </Qat>
        <QatMore><QatDrop /></QatMore>
        <TitleText>anagrafica articoli.xls  [modalità compatibilità] -  <TitleApp>Microsoft Excel</TitleApp></TitleText>
        <WinControls><WinMin c="#7d8ba0" /><WinMax c="#7d8ba0" /><WinX c="#7d8ba0" /></WinControls>
      </TitleBar>
      <Orb><Orblogo /></Orb>
      <TabBar>
        <Tab $w={52} $on>Home</Tab>
        <Tab $w={74}>Inserisci</Tab>
        <Tab $w={113}>Layout di pagina</Tab>
        <Tab $w={74}>Formule</Tab>
        <Tab $w={45}>Dati</Tab>
        <Tab $w={83}>Revisione</Tab>
        <Tab $w={76}>Visualizza</Tab>
        <HelpBox><Help /><WinMin c="#5a6f8c" /><WinMax c="#5a6f8c" /><WinX c="#5a6f8c" /></HelpBox>
      </TabBar>
      <Ribbon>
        <Group $w={70}>
          <GroupBody>
            <Large $w={42}>
              <LargeIcon><PasteBox><Paste /></PasteBox></LargeIcon>
              <div>Incolla</div>
              <CaretBox><Caret /></CaretBox>
            </Large>
            <SmallIcons><Cut /><Copy /><Brush /></SmallIcons>
          </GroupBody>
          <GroupLabel $start>Appunti<Launcher><Launch9 /></Launcher></GroupLabel>
        </Group>

        <Group $w={195}>
          <GroupBody $pt={9} $pl={3}>
            <Stack $gap={7}>
              <Row $gap={4}>
                <Combos>
                  <Combo $w={97}>MS Sans Serif<Caret /></Combo>
                  <Combo $w={42}>8<Caret /></Combo>
                </Combos>
                <BtnGroup>
                  <Seg $w={22}><BigA $s={14}>A</BigA><Up /></Seg>
                  <Seg $w={21}><BigA $s={11}>A</BigA><Up $down /></Seg>
                </BtnGroup>
              </Row>
              <Row $gap={4}>
                <BtnGroup>
                  <Seg $w={23}><Bold>G</Bold></Seg>
                  <Seg $w={23}><Bold $it>C</Bold></Seg>
                  <Seg $w={31} $gap={6}><Bold $ul>S</Bold><Caret /></Seg>
                </BtnGroup>
                <BtnGroup>
                  <Seg $w={32} $gap={5}><Borders /><Caret /></Seg>
                </BtnGroup>
                <BtnGroup>
                  <Seg $w={32} $gap={5}><Fill /><Caret /></Seg>
                  <Seg $w={33} $gap={4}><FontColor /><Caret /></Seg>
                </BtnGroup>
              </Row>
            </Stack>
          </GroupBody>
          <GroupLabel $pr={18}>Carattere<Launcher><Launch9 /></Launcher></GroupLabel>
        </Group>

        <Group $w={243}>
          <GroupBody $pt={9} $pl={3}>
            <Stack $gap={7} $w={117}>
              <Row $gap={4}>
                <BtnGroup>
                  <Seg $w={22}><VA pos={0} /></Seg>
                  <Seg $w={22} $on><VA pos={1} /></Seg>
                  <Seg $w={22}><VA pos={2} /></Seg>
                </BtnGroup>
                <BtnGroup><Seg $w={29}><Orient /><Caret /></Seg></BtnGroup>
              </Row>
              <Row $gap={4}>
                <BtnGroup>
                  <Seg $w={22}><HA a="l" /></Seg>
                  <Seg $w={22}><HA a="c" /></Seg>
                  <Seg $w={22}><HA a="r" /></Seg>
                </BtnGroup>
                <BtnGroup>
                  <Seg $w={22}><Indent /></Seg>
                  <Seg $w={21}><Indent rev /></Seg>
                </BtnGroup>
              </Row>
            </Stack>
            <Divider />
            <Stack $gap={7}>
              <Wrap><WrapIcon />Testo a capo</Wrap>
              <Merge><MergeIcon />Unisci e centra<Caret $ml={3} /></Merge>
            </Stack>
          </GroupBody>
          <GroupLabel $pr={18}>Allineamento<Launcher><Launch9 /></Launcher></GroupLabel>
        </Group>

        <Group $w={135}>
          <GroupBody $pt={9} $pl={3}>
            <Stack $gap={7}>
              <Combo $w={127}>Generale<Caret /></Combo>
              <Row $gap={4}>
                <BtnGroup>
                  <Seg $w={31}><Coins /><Caret /></Seg>
                  <Seg $w={24}><Num>%</Num></Seg>
                  <Seg $w={22}><Num>000</Num></Seg>
                </BtnGroup>
                <BtnGroup>
                  <Seg $w={21}><DecInc /></Seg>
                  <Seg $w={21}><DecInc rev /></Seg>
                </BtnGroup>
              </Row>
            </Stack>
          </GroupBody>
          <GroupLabel $pr={12}>Numeri<Launcher><Launch9 /></Launcher></GroupLabel>
        </Group>

        <Group $w={206}>
          <GroupBody>
            <LargeBtn w={84} icon={<CondFormat />} l1="Formattazione" l2="condizionale" caretInline />
            <LargeBtn w={72} icon={<TableBrush />} l1="Formatta" l2="come tabella" caretInline />
            <LargeBtn w={48} icon={<TableBrush cell />} l1="Stili" l2="cella" caretInline />
          </GroupBody>
          <GroupLabel>Stili</GroupLabel>
        </Group>

        <Group $w={143}>
          <GroupBody $pl={3}>
            <LargeBtn w={45} icon={<Insert />} l1="Inserisci" />
            <LargeBtn w={43} icon={<Del />} l1="Elimina" />
            <LargeBtn w={47} icon={<Fmt />} l1="Formato" />
          </GroupBody>
          <GroupLabel>Celle</GroupLabel>
        </Group>

        <Group $w={247}>
          <GroupBody $pl={4}>
            <Stack $w={131} $pt={1}>
              <SmallAction><ActionIcon><Sigma /></ActionIcon>Somma automatica<Caret $ml={1} /></SmallAction>
              <SmallAction><ActionIcon><FillDown /></ActionIcon>Riempimento<Caret $ml={1} /></SmallAction>
              <SmallAction><ActionIcon><Eraser /></ActionIcon>Cancella<Caret $ml={1} /></SmallAction>
            </Stack>
            <LargeBtn w={46} icon={<SortFilter />} l1="Ordina" l2="e filtra" caretInline />
            <LargeBtn w={62} icon={<Binoc />} l1="Trova e" l2="seleziona" caretInline />
          </GroupBody>
          <GroupLabel>Modifica</GroupLabel>
        </Group>
      </Ribbon>

      <FormulaBar>
        <NameBox><NameText>B21</NameText><NameArrow /></NameBox>
        <FxPill>fx</FxPill>
        <FormulaInput />
        <Expand><DoubleDown /></Expand>
      </FormulaBar>
      <Gap />

      <Sheet>
        <Grid>
          <Corner />
          {HEADS.map((h, i) => <ColHead key={i} $on={h === 'B'}>{h}</ColHead>)}
          {ROWS.slice(1).map((_, i) => <React.Fragment key={i}>{renderRow(i + 1)}</React.Fragment>)}
        </Grid>
        <VScroll>
          <Split />
          <VArrow />
          <VThumb><Grip /></VThumb>
          <VSpacer />
          <VArrow $down />
        </VScroll>
      </Sheet>

      <TabsBar>
        <Nav>
          <NavItem><NavBar /><TriR $left /></NavItem>
          <NavItem><TriR $left /></NavItem>
          <NavItem><TriR /></NavItem>
          <NavItem><TriR /><NavBar /></NavItem>
        </Nav>
        <SheetTab>Sheet1</SheetTab>
        <NewTab><NewSheet /></NewTab>
        <HScroll>
          <HGrip />
          <HBtn $w={17}><TriR $left /></HBtn>
          <HThumb><Grip $h /></HThumb>
          <HFill />
          <HBtn $w={12}><TriR /></HBtn>
          <HGrip />
        </HScroll>
      </TabsBar>

      <Status>
        <Pronto>Pronto</Pronto>
        <StatusRight>
          <Views>
            <ViewBtn $on><Pg k={0} /></ViewBtn>
            <ViewBtn><Pg k={1} /></ViewBtn>
            <ViewBtn><Pg k={2} /></ViewBtn>
          </Views>
          <Zoom>100%</Zoom>
          <ZoomBtn>−</ZoomBtn>
          <ZoomTrack><ZoomKnob /></ZoomTrack>
          <ZoomBtn>+</ZoomBtn>
        </StatusRight>
      </Status>

      <Taskbar>
        <StartBtn><StartFlag />Start</StartBtn>
        <Etched />
        <Launch $w={64}><Server /></Launch>
        <Launch $w={36}><Ps /></Launch>
        <Launch $w={58} $pl={6}><Folder /></Launch>
        <TaskBtn $w={47}><IE /></TaskBtn>
        <TaskBtn $w={47}><Berry /></TaskBtn>
        <TaskBtn $w={47}><Palette /></TaskBtn>
        <TaskBtn $w={43} $down><Xl /></TaskBtn>
        <Push />
        <Etched />
        <Lang>IT</Lang>
        <Etched $h={24} />
        <Tray>
          <TrayIcon $w={16}><DoubleUp /></TrayIcon>
          <TrayIcon><TrayFlag /></TrayIcon>
          <TrayIcon><TrayNet /></TrayIcon>
          <TrayIcon><TraySound /></TrayIcon>
          <Clock>12:04<br />21/11/2012</Clock>
          <TrayIcon><Desktop /></TrayIcon>
        </Tray>
      </Taskbar>
    </Page>
  );
}
